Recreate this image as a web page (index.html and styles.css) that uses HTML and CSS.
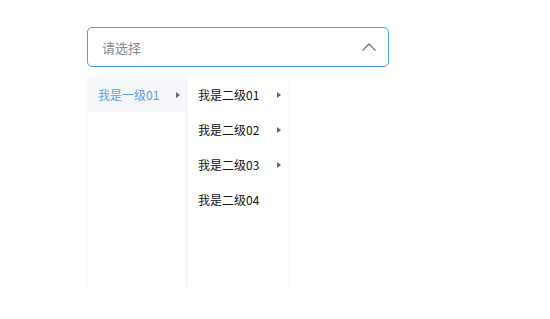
FILE: index.html
```html
<!DOCTYPE html>
<html lang="zh-CN">
<head>
    <meta charset="UTF-8">
    <title>级联选择</title>
    <link rel="stylesheet" href="styles.css">
</head>
<body>
    <div class="wrap">
        <div class="select-box">
            <span class="placeholder">请选择</span>
            <svg class="chevron" width="16" height="10" viewBox="0 0 16 10">
                <path d="M1.5 8.5 L8 2 L14.5 8.5" fill="none" stroke="#7a7a7a" stroke-width="1.4"/>
            </svg>
        </div>
        <div class="menus">
            <ul class="menu menu-1">
                <li class="item active"><span>我是一级01</span><i class="arrow"></i></li>
            </ul>
            <ul class="menu menu-2">
                <li class="item"><span>我是二级01</span><i class="arrow"></i></li>
                <li class="item"><span>我是二级02</span><i class="arrow"></i></li>
                <li class="item"><span>我是二级03</span><i class="arrow"></i></li>
                <li class="item"><span>我是二级04</span></li>
            </ul>
        </div>
    </div>
</body>
</html>
```

FILE: styles.css
```css
*{
    box-sizing:border-box;
}
body{
    margin:0;
    background:white;
    font-family:"Noto Sans CJK SC", "Noto Sans", sans-serif;
}
.wrap{
    padding:27px 0 0 87px;
}
.select-box{
    width:302px;
    height:40px;
    border:1px solid #4a9fef;
    border-radius:5px;
    display:flex;
    align-items:center;
    justify-content:space-between;
    padding:0 11px 0 14px;
}
.placeholder{
    font-size:13px;
    color:#888;
}
.chevron{
    display:block;
}
.menus{
    display:flex;
    gap:3px;
    margin-top:10px;
    margin-left:1px;
}
.menu{
    list-style:none;
    margin:0;
    padding:0;
    height:210px;
    background:white;
    box-shadow:0 1px 4px rgba(0,0,0,0.08);
}
.menu-1{
    width:97px;
}
.menu-1 .item{
    padding-right:5px;
}
.menu-2{
    width:100px;
}
.item{
    height:35px;
    display:flex;
    align-items:center;
    justify-content:space-between;
    padding:0 7px 0 10px;
    font-size:12px;
    color:#111;
}
.item.active{
    background:#f4f6f9;
    color:#5a9cf0;
}
.arrow{
    width:0;
    height:0;
    border-top:3px solid transparent;
    border-bottom:3px solid transparent;
    border-left:4px solid #666;
}
```
